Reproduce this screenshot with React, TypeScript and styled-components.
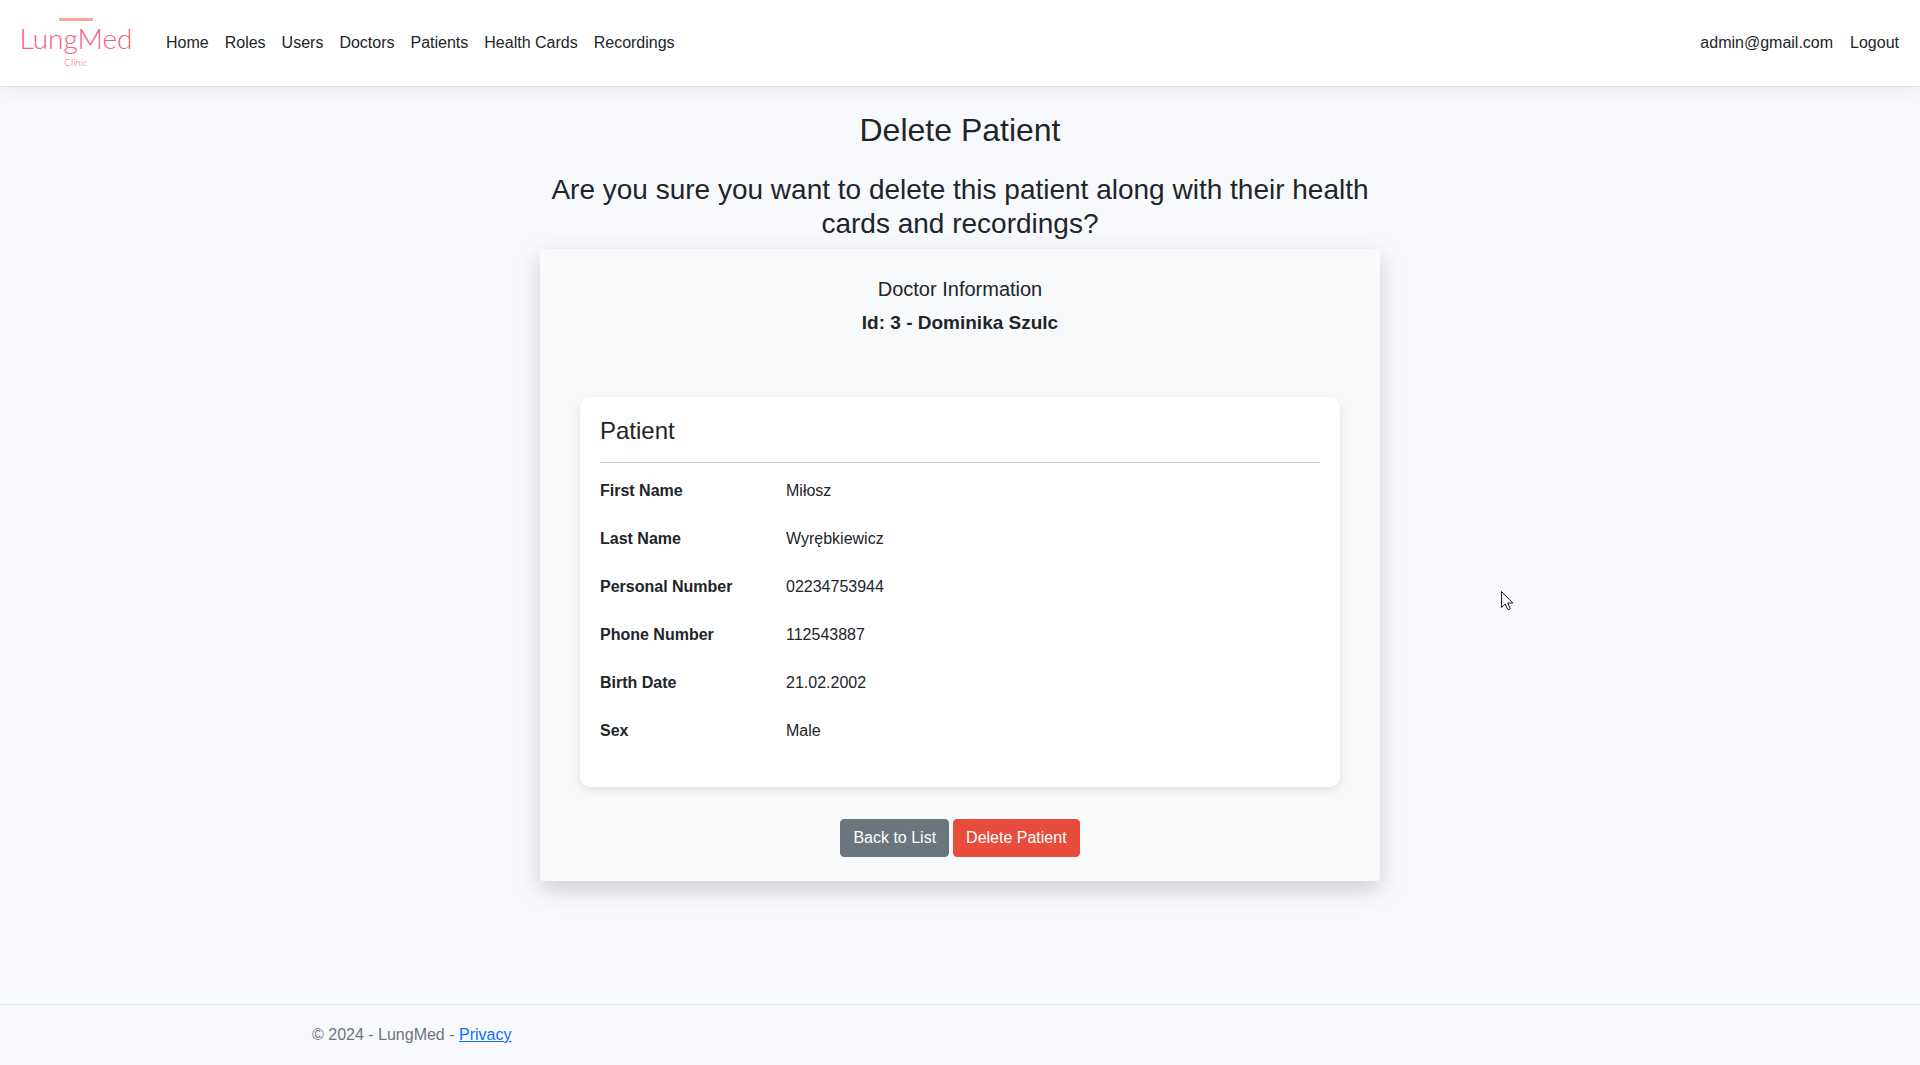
import React from "react";
import styled, { createGlobalStyle } from "styled-components";

const GlobalStyle = createGlobalStyle`
  *, *::before, *::after { box-sizing: border-box; }
  body {
    margin: 0;
    background: #f8f9fd;
    color: #212529;
    font-family: "Liberation Sans", Arial, sans-serif;
    font-size: 16px;
    line-height: 24px;
  }
  h1, h2, h3, h4, p, dl, dd, dt, ul { margin: 0; padding: 0; font-weight: 400; }
`;

const Page = styled.div`
  display: flex;
  flex-direction: column;
  min-height: 100vh;
`;

const Header = styled.header`
  display: flex;
  align-items: center;
  padding: 16px 21px 16px 20px;
  background: #fff;
  border-bottom: 1px solid #dee2e6;
  box-shadow: 0 4px 16px rgba(0, 0, 0, 0.06);
`;

const Brand = styled.a`
  display: flex;
  flex-direction: column;
  align-items: center;
  width: 112px;
  height: 54px;
  padding-top: 2px;
  margin-right: 26px;
  color: #f5607a;
  text-decoration: none;
  font-family: Lato, sans-serif;
  font-weight: 300;
`;

const BrandBar = styled.span`
  width: 34px;
  height: 3px;
  background: #ffa597;
`;

const BrandName = styled.span`
  margin-top: 3px;
  font-size: 28px;
  line-height: 28px;
`;

const BrandTag = styled.span`
  padding-top: 2px;
  font-size: 10px;
  line-height: 16px;
`;

const NavList = styled.ul`
  display: flex;
  list-style: none;
`;

const NavLink = styled.a`
  display: block;
  padding: 8px;
  color: #212529;
  text-decoration: none;
`;

const Account = styled.div`
  display: flex;
  align-items: center;
  gap: 17px;
  margin-left: auto;
`;

const LogoutButton = styled.button`
  padding: 0;
  border: 0;
  background: none;
  color: inherit;
  font: inherit;
  cursor: pointer;
`;

const Main = styled.main`
  flex: 1;
  width: 100%;
  max-width: 840px;
  margin: 0 auto;
  padding: 24px 0;
`;

const Title = styled.h1`
  font-size: 32px;
  line-height: 38px;
  text-align: center;
`;

const Question = styled.h2`
  margin: 24px 0 8px;
  font-size: 28px;
  line-height: 34px;
  text-align: center;
`;

const Card = styled.section`
  padding: 24px 40px;
  background: #f8f9fa;
  border-radius: 4px;
  box-shadow: 0 8px 24px rgba(0, 0, 0, 0.18);
`;

const Doctor = styled.div`
  margin-bottom: 62px;
  text-align: center;
`;

const DoctorHeading = styled.h3`
  margin-bottom: 6px;
  font-size: 20px;
  line-height: 32px;
`;

const DoctorName = styled.p`
  font-size: 19px;
  font-weight: 700;
`;

const PatientCard = styled.section`
  padding: 20px 20px 44px;
  background: #fff;
  border-radius: 10px;
  box-shadow: 0 4px 8px rgba(0, 0, 0, 0.1);
`;

const PatientHeading = styled.h3`
  padding-bottom: 17px;
  border-bottom: 1px solid #c8c9ca;
  font-size: 24px;
  line-height: 28px;
`;

const Details = styled.dl`
  display: grid;
  grid-template-columns: 186px 1fr;
  row-gap: 24px;
  padding-top: 16px;
`;

const Term = styled.dt`
  font-weight: 700;
`;

const Actions = styled.form`
  display: flex;
  justify-content: center;
  gap: 4px;
  margin-top: 32px;
`;

const buttonLook = `
  padding: 6px 12px;
  border-radius: 4px;
  color: #fff;
  font: inherit;
  text-decoration: none;
  cursor: pointer;
`;

const BackLink = styled.a`
  ${buttonLook}
  background: #6c757d;
  border: 1px solid #6c757d;
`;

const DeleteButton = styled.button`
  ${buttonLook}
  background: #e74c3c;
  border: 1px solid #e74c3c;
`;

const Footer = styled.footer`
  border-top: 1px solid #dee2e6;
  color: #6c757d;
  line-height: 60px;
`;

const FooterInner = styled.div`
  max-width: 1320px;
  margin: 0 auto;
  padding: 0 12px;

  a { color: #0d6efd; }
`;

const Cursor = styled.svg`
  position: absolute;
  left: 1501px;
  top: 590px;
  pointer-events: none;
`;

const links = ["Home", "Roles", "Users", "Doctors", "Patients", "Health Cards", "Recordings"];

const patient = [
  ["First Name", "Miłosz"],
  ["Last Name", "Wyrębkiewicz"],
  ["Personal Number", "02234753944"],
  ["Phone Number", "112543887"],
  ["Birth Date", "21.02.2002"],
  ["Sex", "Male"],
];

export default function App() {
  return (
    <Page>
      <GlobalStyle />
      <Header>
        <Brand href="#">
          <BrandBar />
          <BrandName>LungMed</BrandName>
          <BrandTag>Clinic</BrandTag>
        </Brand>
        <nav>
          <NavList>
            {links.map((label) => (
              <li key={label}>
                <NavLink href="#">{label}</NavLink>
              </li>
            ))}
          </NavList>
        </nav>
        <Account>
          <span>admin@gmail.com</span>
          <LogoutButton type="button">Logout</LogoutButton>
        </Account>
      </Header>
      <Main>
        <Title>Delete Patient</Title>
        <Question>
          Are you sure you want to delete this patient along with their health cards and recordings?
        </Question>
        <Card>
          <Doctor>
            <DoctorHeading>Doctor Information</DoctorHeading>
            <DoctorName>Id: 3 - Dominika Szulc</DoctorName>
          </Doctor>
          <PatientCard>
            <PatientHeading>Patient</PatientHeading>
            <Details>
              {patient.map(([term, value]) => (
                <React.Fragment key={term}>
                  <Term>{term}</Term>
                  <dd>{value}</dd>
                </React.Fragment>
              ))}
            </Details>
          </PatientCard>
          <Actions onSubmit={(event) => event.preventDefault()}>
            <BackLink href="#">Back to List</BackLink>
            <DeleteButton type="submit">Delete Patient</DeleteButton>
          </Actions>
        </Card>
      </Main>
      <Footer>
        <FooterInner>
          © 2024 - LungMed - <a href="#">Privacy</a>
        </FooterInner>
      </Footer>
      <Cursor width="13" height="21" viewBox="0 0 13 21" aria-hidden="true">
        <path
          d="M0.5 1.5V17.5L4.2 14L6.6 19.2Q8 20.2 9.2 18.6L6.8 13H11.8Z"
          fill="#fff"
          stroke="#1b1b26"
          strokeWidth="1"
        />
      </Cursor>
    </Page>
  );
}
